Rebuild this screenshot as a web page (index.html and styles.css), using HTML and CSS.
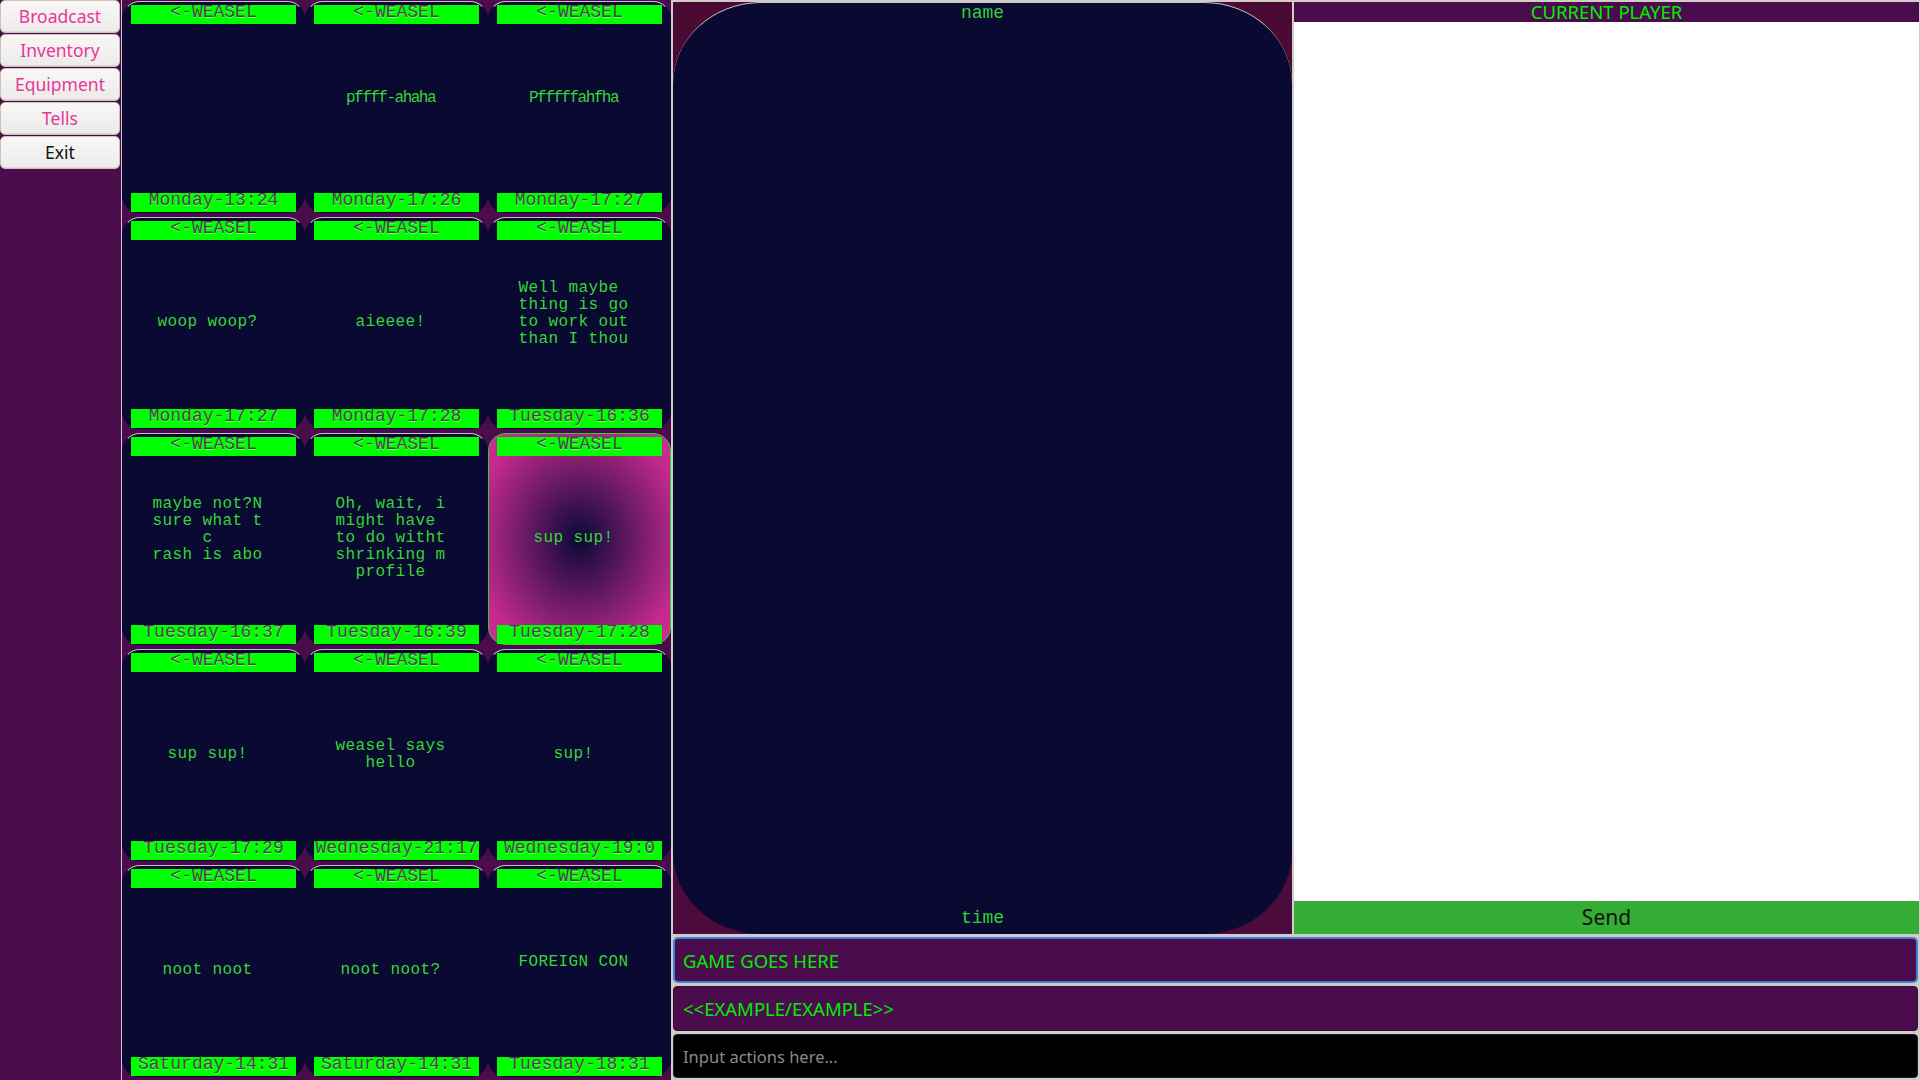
FILE: index.html
```html
<!DOCTYPE html>
<html>
<head>
<meta charset="utf-8">
<title>Game</title>
<link rel="stylesheet" href="styles.css">
</head>
<body>
<nav class="sidebar">
  <button class="nav-btn">Broadcast</button>
  <button class="nav-btn">Inventory</button>
  <button class="nav-btn">Equipment</button>
  <button class="nav-btn">Tells</button>
  <button class="nav-btn exit">Exit</button>
</nav>

<section class="feed">
  <div class="card"><div class="tag">&lt;-WEASEL</div><div class="msg"></div><div class="tag">Monday-13:24</div></div>
  <div class="card"><div class="tag">&lt;-WEASEL</div><div class="msg tight">pffff-ahaha
 </div><div class="tag">Monday-17:26</div></div>
  <div class="card"><div class="tag">&lt;-WEASEL</div><div class="msg tight">Pfffffahfha
 </div><div class="tag">Monday-17:27</div></div>

  <div class="card"><div class="tag">&lt;-WEASEL</div><div class="msg">woop woop?</div><div class="tag">Monday-17:27</div></div>
  <div class="card"><div class="tag">&lt;-WEASEL</div><div class="msg">aieeee!</div><div class="tag">Monday-17:28</div></div>
  <div class="card"><div class="tag">&lt;-WEASEL</div><div class="msg">Well maybe 
thing is go
to work out
than I thou
 </div><div class="tag">Tuesday-16:36</div></div>

  <div class="card"><div class="tag">&lt;-WEASEL</div><div class="msg">maybe not?N
sure what t
c
rash is abo
 </div><div class="tag">Tuesday-16:37</div></div>
  <div class="card"><div class="tag">&lt;-WEASEL</div><div class="msg">Oh, wait, i
might have 
to do witht
shrinking m
profile</div><div class="tag">Tuesday-16:39</div></div>
  <div class="card selected"><div class="tag">&lt;-WEASEL</div><div class="msg">sup sup!</div><div class="tag">Tuesday-17:28</div></div>

  <div class="card"><div class="tag">&lt;-WEASEL</div><div class="msg">sup sup!</div><div class="tag">Tuesday-17:29</div></div>
  <div class="card"><div class="tag">&lt;-WEASEL</div><div class="msg">weasel says
hello</div><div class="tag">Wednesday-21:17</div></div>
  <div class="card"><div class="tag">&lt;-WEASEL</div><div class="msg">sup!</div><div class="tag">Wednesday-19:0</div></div>

  <div class="card"><div class="tag">&lt;-WEASEL</div><div class="msg">noot noot</div><div class="tag">Saturday-14:31</div></div>
  <div class="card"><div class="tag">&lt;-WEASEL</div><div class="msg">noot noot?</div><div class="tag">Saturday-14:31</div></div>
  <div class="card"><div class="tag">&lt;-WEASEL</div><div class="msg">FOREIGN CON
 </div><div class="tag">Tuesday-18:31</div></div>
</section>

<main class="main">
  <div class="top">
    <div class="stage">
      <div class="screen">
        <div class="stage-label">name</div>
        <div class="stage-label">time</div>
      </div>
    </div>
    <aside class="player">
      <div class="player-head">CURRENT PLAYER</div>
      <div class="player-body"></div>
      <button class="send">Send</button>
    </aside>
  </div>
  <div class="bar game">GAME GOES HERE</div>
  <div class="bar example">&lt;&lt;EXAMPLE/EXAMPLE&gt;&gt;</div>
  <input class="bar action" type="text" placeholder="Input actions here...">
</main>
</body>
</html>
```

FILE: styles.css
```css
* { box-sizing: border-box; }

html, body {
  margin: 0;
  padding: 0;
}

body {
  width: 1920px;
  height: 1080px;
  overflow: hidden;
  display: flex;
  background: #d2ccc8;
  font-family: "Noto Sans", "DejaVu Sans", sans-serif;
}

/* ---------- sidebar ---------- */
.sidebar {
  width: 121px;
  flex: none;
  background: #4a0c4c;
  display: flex;
  flex-direction: column;
  gap: 1px;
}

.nav-btn {
  width: 120px;
  height: 33px;
  margin: 0;
  padding: 0;
  border: 1px solid #c9c2bd;
  border-radius: 5px;
  background: linear-gradient(#f8f7f6, #ecebe9);
  box-shadow: inset 0 -1px 0 #ddd8d4;
  color: #e6389a;
  font-family: "Noto Sans", sans-serif;
  font-size: 17.5px;
  line-height: 1;
  text-align: center;
}

.nav-btn.exit { color: #111; }

/* ---------- message feed ---------- */
.feed {
  width: 550px;
  flex: none;
  border-left: 1px solid #cdc7c3;
  background: #4a0c4a;
  display: grid;
  grid-template-columns: repeat(3, 183px);
  grid-template-rows: repeat(5, 216px);
}

.card {
  height: 212px;
  margin: 1px 0 3px;
  padding: 3px 8px 0;
  border: 1px solid #0a0932;
  border-top-color: #c4c2cc;
  border-radius: 18px;
  background: #0a0932;
  display: flex;
  flex-direction: column;
}

.card.selected {
  border-color: #2fd02f;
  background: radial-gradient(ellipse at center, #0b0a33 0%, #3c1150 22%, #86206f 55%, #c42990 82%, #d22c96 100%);
}

.tag {
  height: 19px;
  flex: none;
  background: #00ff00;
  color: #454545;
  font-family: "Liberation Mono", "DejaVu Sans Mono", monospace;
  font-size: 18px;
  line-height: 15px;
  text-align: center;
  white-space: nowrap;
  text-shadow: 0 1px 0 rgba(255, 255, 255, 0.45);
}

.msg {
  flex: 1;
  display: flex;
  align-items: center;
  justify-content: center;
  padding: 0 12px 4px 0;
  white-space: pre;
  text-align: center;
  color: #36d636;
  font-family: "Liberation Mono", "DejaVu Sans Mono", monospace;
  font-size: 16px;
  line-height: 17px;
  letter-spacing: 0.4px;
}

.msg.tight { letter-spacing: -1.5px; }

/* ---------- main area ---------- */
.main {
  flex: 1;
  margin-left: 2px;
  padding-top: 2px;
  display: flex;
  flex-direction: column;
  gap: 3px;
}

.top {
  height: 932px;
  flex: none;
  display: flex;
  gap: 2px;
}

.stage {
  width: 619px;
  flex: none;
  background: linear-gradient(#4a0a31, #4b0b3c);
}

.screen {
  height: 100%;
  background: #0a0932;
  border-top: 1.5px solid #c6c4cc;
  border-radius: 88px / 82px;
  display: flex;
  flex-direction: column;
  justify-content: space-between;
  align-items: center;
  padding: 0 0 6px;
}

.stage-label {
  color: #34d134;
  font-family: "Liberation Mono", "DejaVu Sans Mono", monospace;
  font-size: 18px;
  line-height: 20px;
}

.player {
  flex: 1;
  margin-right: 1px;
  display: flex;
  flex-direction: column;
}

.player-head {
  height: 20px;
  flex: none;
  background: #4a0c4c;
  color: #00ee00;
  font-size: 18.5px;
  line-height: 20px;
  text-align: center;
}

.player-body {
  flex: 1;
  background: #ffffff;
}

.send {
  height: 33px;
  flex: none;
  margin: 0;
  border: none;
  background: #34ad34;
  color: #111;
  font-family: "Noto Sans", sans-serif;
  font-size: 21px;
  line-height: 33px;
  padding: 0;
}

.bar {
  margin: 0 2px 0 0;
  display: flex;
  align-items: center;
  padding: 0 8px;
  font-family: "Noto Sans", sans-serif;
  font-size: 18.5px;
  color: #00ee00;
  border-radius: 4px;
}

.game {
  height: 46px;
  background: #4a0c4c;
  border: 2px solid #3a80dc;
  border-radius: 5px;
}

.example {
  height: 45px;
  background: #4a0c4c;
  border: 1px solid #3a0a3a;
  padding-left: 9px;
}

.action {
  height: 44px;
  width: auto;
  background: #000;
  border: 1px solid #222;
  outline: none;
  padding-left: 9px;
  font-size: 16.5px;
  color: #ddd;
}

.action::placeholder {
  color: #8a8a8a;
}
```
